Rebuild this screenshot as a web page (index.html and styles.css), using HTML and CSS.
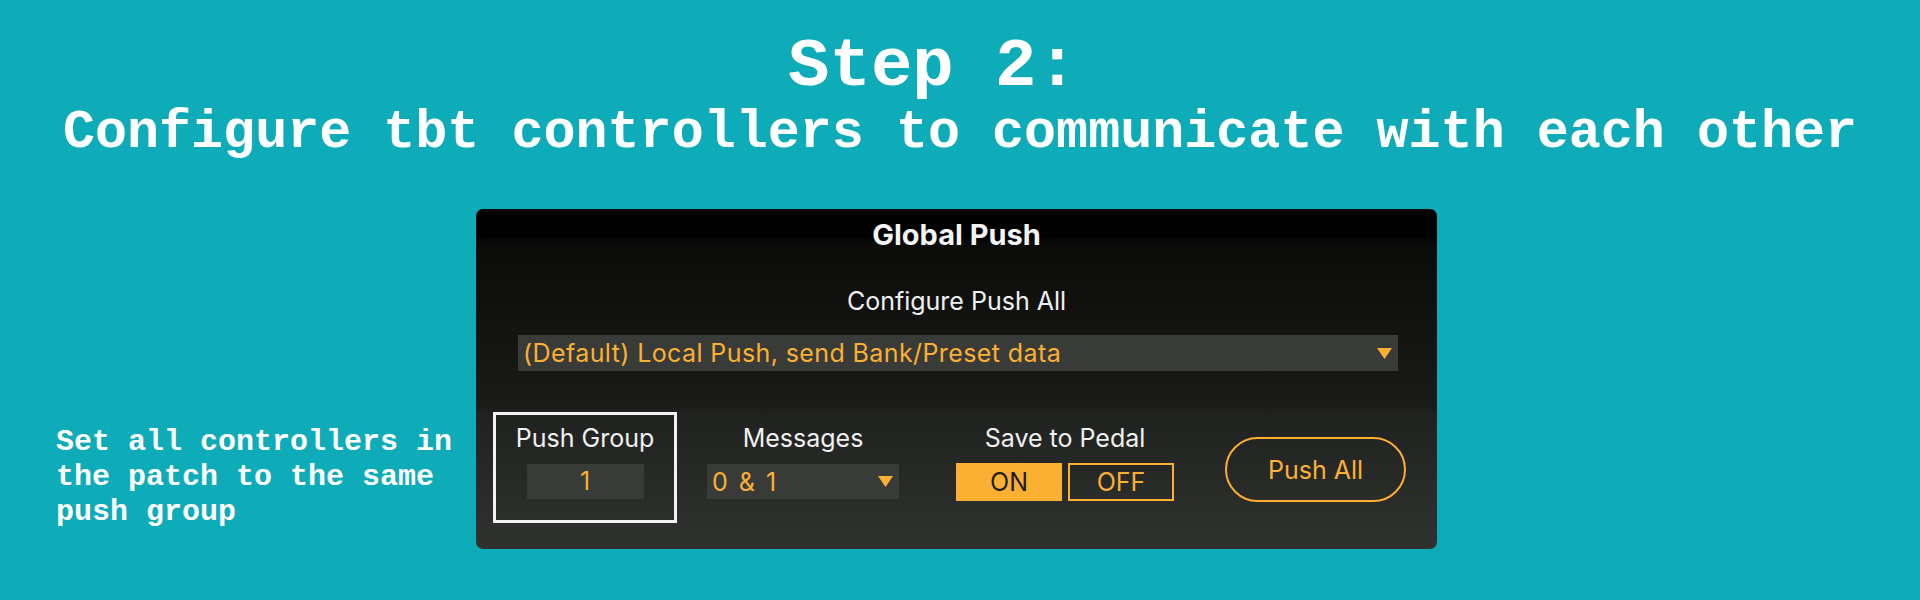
FILE: index.html
```html
<!DOCTYPE html>
<html lang="en">
<head>
    <meta charset="UTF-8" />
    <title>Step 2 - Global Push</title>
    <link rel="stylesheet" href="styles.css">
</head>
<body>
    <h1 class="step">Step 2:</h1>
    <h2 class="subtitle">Configure tbt controllers to communicate with each other</h2>

    <div class="content">
        <p class="note">Set all controllers in the patch to the same push group</p>

        <div class="panel">
            <div class="panel-title">Global Push</div>
            <div class="config-label">Configure Push All</div>
            <div class="select wide">
                <span>(Default) Local Push, send Bank/Preset data</span>
                <svg class="arrow" width="15" height="11" viewBox="0 0 15 11"><path d="M0 0H15L7.5 11Z" fill="#fbb034"/></svg>
            </div>

            <div class="controls">
                <div class="group-box">
                    <div class="label">Push Group</div>
                    <div class="number">1</div>
                </div>
                <div class="col messages">
                    <div class="label">Messages</div>
                    <div class="select small">
                        <span>0 &amp; 1</span>
                        <svg class="arrow" width="15" height="11" viewBox="0 0 15 11"><path d="M0 0H15L7.5 11Z" fill="#fbb034"/></svg>
                    </div>
                </div>
                <div class="col save">
                    <div class="label">Save to Pedal</div>
                    <div class="toggle">
                        <button class="on">ON</button>
                        <button class="off">OFF</button>
                    </div>
                </div>
                <button class="push-all">Push All</button>
            </div>
        </div>
    </div>
</body>
</html>
```

FILE: styles.css
```css
body { margin: 0; background: #0eabb8; color: #fff; font-family: "Liberation Mono", "Courier New", monospace; }
.step { margin: 0; padding: 32px 54px 0 0; font-size: 69px; line-height: 70px; font-weight: bold; text-align: center; }
.subtitle { margin: 5px 0 0; font-size: 53.4px; line-height: 52px; font-weight: bold; text-align: center; }

.content { display: flex; align-items: flex-start; padding-left: 56px; margin-top: 50px; }
.note { width: 420px; margin: 216px 0 0; font-size: 30px; line-height: 35px; font-weight: bold; }

.panel { width: 961px; height: 340px; box-sizing: border-box; border-radius: 7px; font-family: Inter, "Open Sans", sans-serif;
         background: linear-gradient(#000 0, #000 8%, #0b0c0a 10%, #1a1b19 58%, #20221f 60%, #30322f 100%); }
.panel-title { padding-top: 10px; font-size: 29px; line-height: 32px; font-weight: bold; text-align: center; color: #f4f4f4; }
.config-label { margin-top: 35px; font-size: 25px; line-height: 30px; text-align: center; color: #f0f0f0; }

.select { display: flex; align-items: center; justify-content: space-between; background: #393b38; color: #fbb034; box-sizing: border-box; }
.select.wide { height: 36px; margin: 19px 39px 0 42px; padding: 0 6px 0 5px; font-size: 25px; letter-spacing: 0.4px; }
.select.small { width: 192px; height: 35px; margin-top: 11px; padding: 0 6px 0 5px; font-size: 25px; word-spacing: 3px; letter-spacing: 0.5px; }

.controls { display: flex; align-items: flex-start; margin-top: 41px; padding-left: 17px; }
.label { font-size: 25px; line-height: 30px; text-align: center; color: #f0f0f0; }

.group-box { width: 184px; height: 111px; box-sizing: border-box; border: 3px solid #f2f2f2; padding-top: 8px; }
.number { width: 117px; height: 35px; margin: 11px auto 0; background: #393b38; color: #fbb034; font-size: 25px; line-height: 35px; text-align: center; }

.col { padding-top: 11px; }
.messages { width: 192px; margin-left: 30px; }
.save { width: 218px; margin-left: 57px; }

.toggle { display: flex; justify-content: space-between; margin-top: 10px; }
.toggle button { width: 106px; height: 38px; box-sizing: border-box; font-family: Inter, "Open Sans", sans-serif; font-size: 25px; padding: 0; }
.toggle .on { background: #fbb034; color: #1e1e1e; border: none; }
.toggle .off { background: transparent; color: #fbb034; border: 2px solid #fbb034; }

.push-all { width: 181px; height: 65px; margin: 25px 0 0 51px; box-sizing: border-box; border: 2px solid #fbb034; border-radius: 33px;
            background: transparent; color: #fbb034; font-family: Inter, "Open Sans", sans-serif; font-size: 25px; padding: 0; }
```
